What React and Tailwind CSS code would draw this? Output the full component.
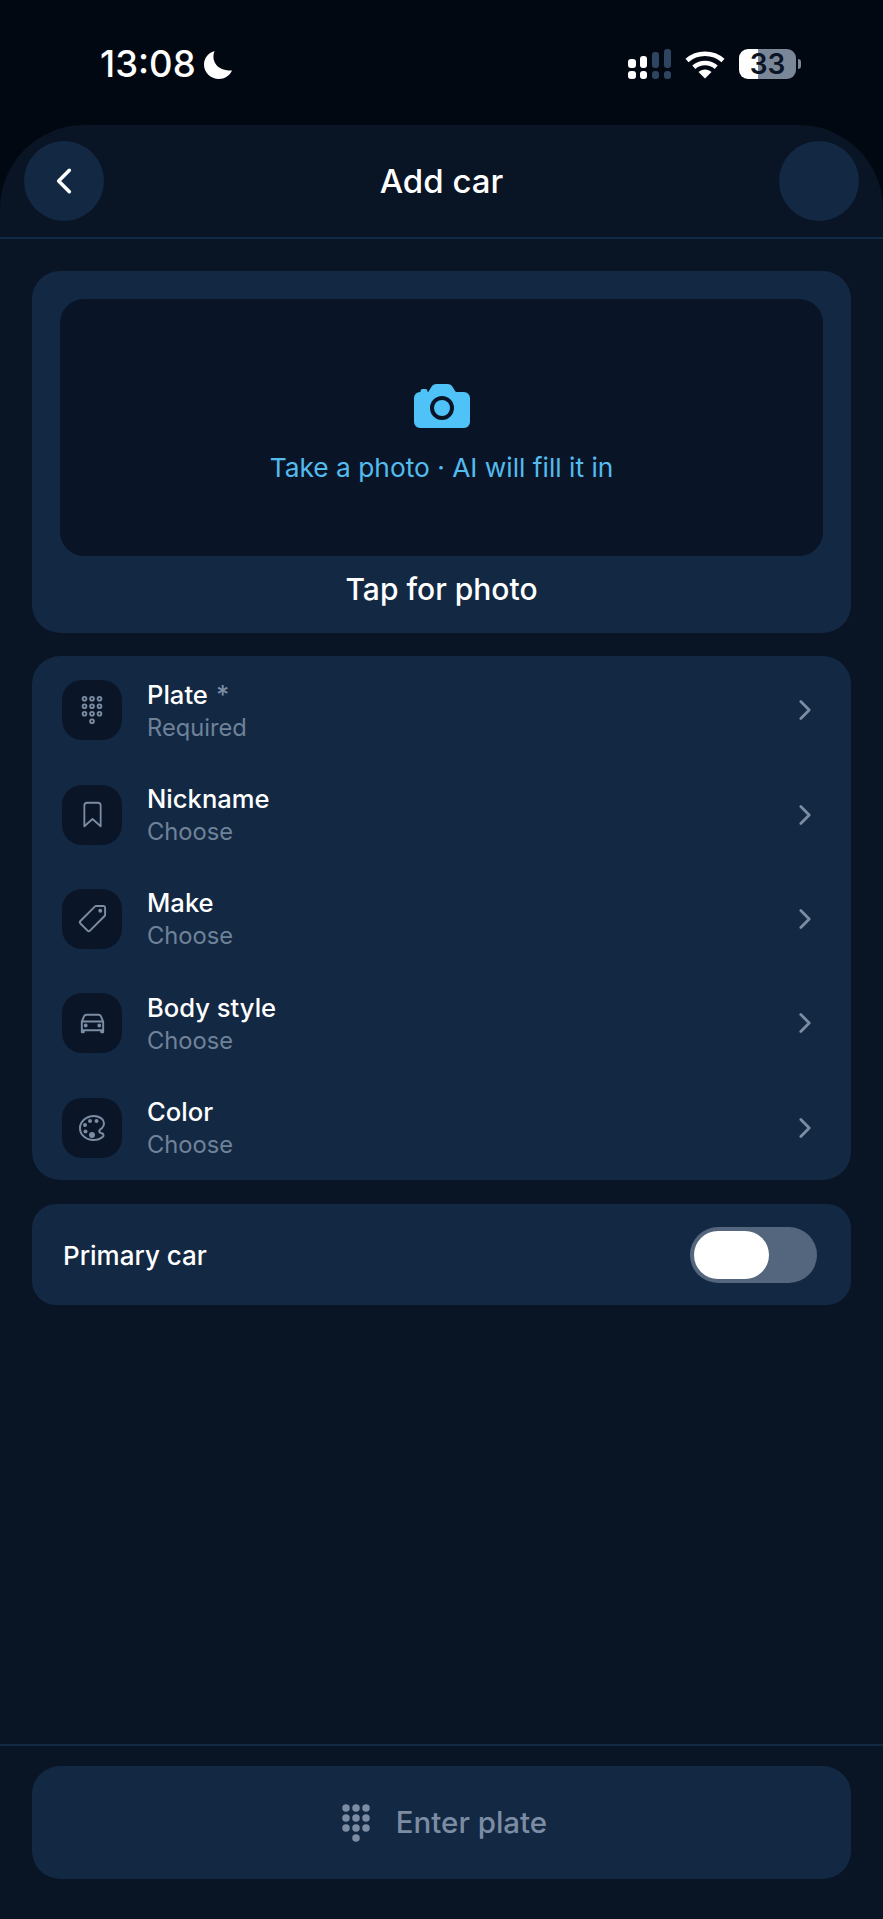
import React from "react";
import {
  IoCamera,
  IoChevronBack,
  IoChevronForward,
  IoKeypad,
  IoKeypadOutline,
  IoBookmarkOutline,
  IoPricetagOutline,
  IoCarOutline,
  IoColorPaletteOutline,
} from "react-icons/io5";

const rows = [
  { title: "Plate", star: true, sub: "Required", Icon: IoKeypadOutline, size: 30 },
  { title: "Nickname", sub: "Choose", Icon: IoBookmarkOutline, size: 29 },
  { title: "Make", sub: "Choose", Icon: IoPricetagOutline, size: 31 },
  { title: "Body style", sub: "Choose", Icon: IoCarOutline, size: 31 },
  { title: "Color", sub: "Choose", Icon: IoColorPaletteOutline, size: 32 },
];

function SignalIcon() {
  return (
    <svg width="43" height="30" viewBox="0 0 43 30">
      <rect x="0" y="10" width="8" height="9" rx="3" fill="#fff" />
      <rect x="0" y="22" width="8" height="8" rx="3" fill="#fff" />
      <rect x="12" y="7" width="7" height="12" rx="3" fill="#fff" />
      <rect x="12" y="22" width="7" height="8" rx="3" fill="#fff" />
      <rect x="24" y="3" width="7" height="16" rx="3" fill="#2e4562" />
      <rect x="24" y="22" width="7" height="8" rx="3" fill="#2e4562" />
      <rect x="36" y="0" width="7" height="19" rx="3" fill="#2e4562" />
      <rect x="36" y="22" width="7" height="8" rx="3" fill="#2e4562" />
    </svg>
  );
}

function WifiIcon() {
  return (
    <svg width="40" height="29" viewBox="0 0 40 29" fill="none">
      <path d="M2 10.5C12 1.5 28 1.5 38 10.5" stroke="#fff" strokeWidth="4.6" />
      <path d="M8.8 17.2C15 11.6 25 11.6 31.2 17.2" stroke="#fff" strokeWidth="4.6" />
      <path d="M13.5 22C17 18.5 23 18.5 26.5 22L20 28.5Z" fill="#fff" />
    </svg>
  );
}

function MoonIcon() {
  return (
    <svg width="30" height="30" viewBox="0 0 30 30">
      <path
        d="M11.5 1C8 10 13 21 29 20.5C26.5 26 21.5 29 16 29C7.5 29 1 22.5 1 14.5C1 8.5 5 3 11.5 1Z"
        fill="#fff"
      />
    </svg>
  );
}

function Row({ title, star, sub, Icon, size }) {
  return (
    <div className="flex h-[104.4px] items-center pl-[30px] pr-[31px]">
      <div className="flex h-[60px] w-[60px] items-center justify-center rounded-[20px] bg-[#0a1628]">
        <Icon size={size} color="#7b8ca3" />
      </div>
      <div className="ml-[25px] flex-1 pt-[2px]">
        <div className="text-[25.6px] leading-[32px] font-medium text-white">
          {title}
          {star && <span className="ml-[8px] text-[#7b8ca3]">*</span>}
        </div>
        <div className="mt-[1px] text-[23.7px] leading-[32px] text-[#6f8298]">{sub}</div>
      </div>
      <IoChevronForward size={30} color="#7b8ca3" />
    </div>
  );
}

export default function App() {
  return (
    <div className="flex h-[1919px] w-[883px] flex-col bg-[#020812] font-['Inter',sans-serif]">
      <div className="flex h-[125px] shrink-0 items-start justify-between pl-[100px] pr-[82px] pt-[44px]">
        <div className="flex items-center gap-[7px]">
          <span className="text-[36.5px] leading-[41px] font-medium text-white">13:08</span>
          <MoonIcon />
        </div>
        <div className="flex items-center gap-[14px] pt-[5px]">
          <SignalIcon />
          <WifiIcon />
          <div className="flex items-center gap-[2px]">
            <div className="flex h-[30px] w-[57px] items-center justify-center rounded-[9px] bg-[linear-gradient(90deg,#ffffff_33%,#7a8799_33%)] text-[28px] leading-none font-semibold text-[#0a1424]">
              33
            </div>
            <div className="h-[10px] w-[3px] rounded-r-full bg-[#7a8799]" />
          </div>
        </div>
      </div>

      <div className="flex flex-1 flex-col rounded-t-[84px] bg-[#091425]">
        <div className="flex h-[114px] shrink-0 items-start justify-between border-b-2 border-[#132a45] px-[24px] pt-[16px]">
          <div className="flex h-[80px] w-[80px] items-center justify-center rounded-full bg-[#132843]">
            <IoChevronBack size={38} color="#fff" />
          </div>
          <div className="pt-[20px] text-[33px] leading-[40px] font-medium text-white">Add car</div>
          <div className="h-[80px] w-[80px] rounded-full bg-[#132843]" />
        </div>

        <div className="flex flex-1 flex-col gap-[24px] px-[32px] pt-[32px]">
          <div className="h-[362px] rounded-[28px] bg-[#132843] px-[28px] pt-[28px]">
            <div className="flex h-[257px] flex-col items-center rounded-[24px] bg-[#091526] pt-[75px]">
              <IoCamera size={64} color="#4fc3f7" />
              <div className="mt-[14px] text-[26.3px] leading-[32px] text-[#54bbee]">
                Take a photo · AI will fill it in
              </div>
            </div>
            <div className="mt-[15px] text-center text-[30px] leading-[36px] font-medium text-white">
              Tap for photo
            </div>
          </div>

          <div className="-mt-[1px] h-[524px] rounded-[28px] bg-[#132843] pt-[2px]">
            {rows.map((row) => (
              <Row key={row.title} {...row} />
            ))}
          </div>

          <div className="flex h-[101px] items-center justify-between rounded-[24px] bg-[#132843] pl-[31px] pr-[34px]">
            <span className="pt-[2px] text-[26px] font-medium text-white">Primary car</span>
            <div className="flex h-[56px] w-[127px] items-center rounded-full bg-[#54667d] pl-[4px]">
              <div className="h-[48px] w-[75px] rounded-full bg-white" />
            </div>
          </div>
        </div>

        <div className="shrink-0 border-t-2 border-[#132a45] px-[32px] pb-[40px] pt-[20px]">
          <div className="flex h-[113px] items-center justify-center gap-[20px] rounded-[28px] bg-[#132843]">
            <IoKeypad size={40} color="#7b8ca3" />
            <span className="text-[29.5px] font-medium text-[#7b8ca3]">Enter plate</span>
          </div>
        </div>
      </div>
    </div>
  );
}
